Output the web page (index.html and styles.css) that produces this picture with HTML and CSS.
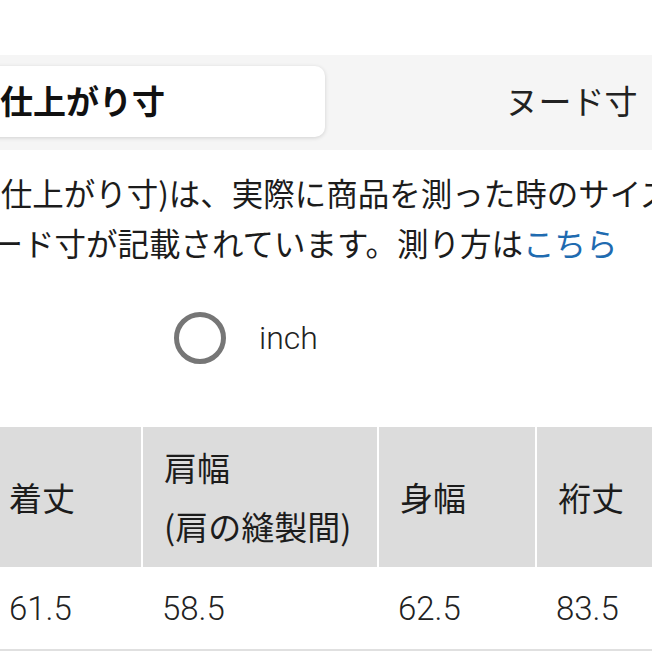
FILE: index.html
```html
<!DOCTYPE html>
<html lang="ja">
<head>
  <meta charset="UTF-8">
  <title>サイズ表</title>
  <link rel="stylesheet" href="styles.css">
</head>
<body>

  <div class="pagina">

    <div class="pestanas">
      <div class="pestana activa">仕上がり寸</div>
      <div class="pestana">ヌード寸</div>
    </div>

    <p class="descripcion">
      <span class="linea uno">(仕上がり寸)は、実際に商品を測った時のサイズです。</span>
      <span class="linea dos">ヌード寸が記載されています。測り方は<a href="#">こちら</a></span>
    </p>

    <div class="unidades">
      <label class="opcion">
        <span class="radio"></span>
        <span class="texto">inch</span>
      </label>
    </div>

    <div class="tabla">
      <div class="celda cab">着丈</div>
      <div class="celda cab">肩幅<br>(肩の縫製間)</div>
      <div class="celda cab">身幅</div>
      <div class="celda cab">裄丈</div>

      <div class="celda dato">61.5</div>
      <div class="celda dato">58.5</div>
      <div class="celda dato">62.5</div>
      <div class="celda dato">83.5</div>
    </div>

  </div>

</body>
</html>
```

FILE: styles.css
```css
  html, body {
    margin: 0;
    padding: 0;
    background-color: #fff;
    overflow: hidden;
  }

  body {
    font-family: "Noto Sans CJK JP", "Noto Sans", sans-serif;
    color: #1c1c1c;
    width: 652px;
    height: 652px;
  }

  .pagina {
    width: 1000px;
    margin-left: -170px;
  }

  /* pestañas */
  .pestanas {
    margin-top: 55px;
    height: 95px;
    box-sizing: border-box;
    padding: 11px 10px;
    background-color: #f5f5f5;
    display: flex;
    gap: 4px;
  }

  .pestana {
    width: 485px;
    height: 71px;
    display: flex;
    align-items: center;
    justify-content: center;
    font-size: 33px;
    color: #222;
    padding-bottom: 3px;
    box-sizing: border-box;
  }

  .pestana.activa {
    background-color: #fff;
    border-radius: 10px;
    box-shadow: 0 1px 4px rgba(0, 0, 0, 0.15);
    font-weight: bold;
    color: #111;
  }

  /* texto */
  .descripcion {
    margin: 18px 0 0 0;
    font-size: 31.5px;
    line-height: 49.5px;
    white-space: nowrap;
  }

  .linea {
    display: block;
  }

  .linea.uno {
    margin-left: 160px;
  }

  .linea.dos {
    margin-left: 130px;
  }

  .descripcion a {
    color: #1f6bb0;
    text-decoration: none;
  }

  /* unidades */
  .unidades {
    margin-top: 45px;
    padding-left: 344px;
    height: 52px;
  }

  .opcion {
    display: flex;
    align-items: center;
    gap: 33px;
  }

  .radio {
    width: 52px;
    height: 52px;
    box-sizing: border-box;
    border: 5px solid #767676;
    border-radius: 50%;
  }

  .texto {
    font-family: Roboto, "Noto Sans", sans-serif;
    font-weight: 300;
    font-size: 32px;
    color: #222;
  }

  /* tabla */
  .tabla {
    margin-top: 63px;
    margin-left: 158px;
    display: grid;
    grid-template-columns: 153px 236px 158px 220px;
  }

  .celda {
    box-sizing: border-box;
    padding-left: 21px;
    display: flex;
    align-items: center;
  }

  .cab {
    height: 140px;
    background-color: #dcdcdc;
    font-size: 33px;
    line-height: 59px;
    color: #1c1c1c;
  }

  .cab + .cab {
    border-left: 2px solid #fff;
  }

  .dato {
    height: 84px;
    border-bottom: 2px solid #e0e0e0;
    font-family: Roboto, "Noto Sans", sans-serif;
    font-weight: 300;
    font-size: 33px;
    color: #222;
  }
```
